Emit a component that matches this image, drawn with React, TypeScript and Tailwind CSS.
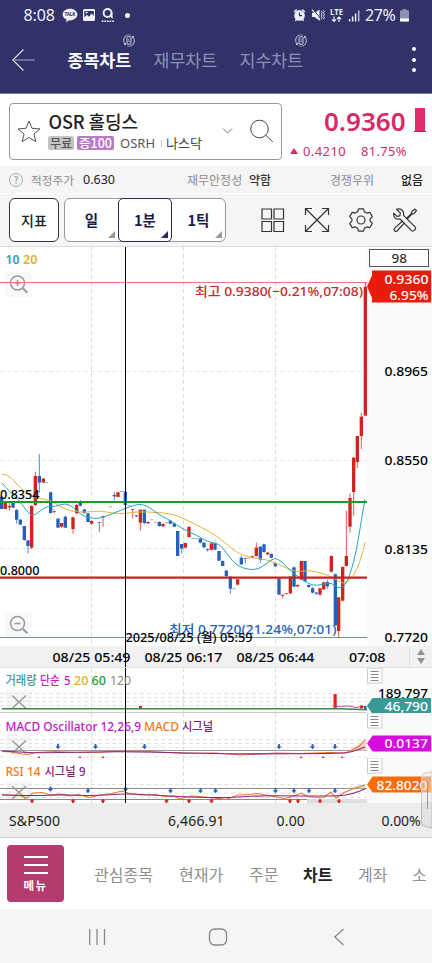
import React from "react";

const FONT = "font-['Noto_Sans','Noto_Sans_CJK_KR',sans-serif]";
const KR = "font-['Noto_Sans_CJK_KR',sans-serif]";

const RED = "#d3231c";
const BLUE = "#2560bd";

/* ---------- chart text ---------- */
type LabelProps = {
  x: number;
  y: number;
  w: number;
  size?: number;
  fill?: string;
  weight?: number;
  children: string;
};
function Label({ x, y, w, size = 13, fill = "#111", weight = 500, children }: LabelProps) {
  return (
    <text x={x} y={y} textLength={w} lengthAdjust="spacingAndGlyphs" fontSize={size} fill={fill} fontWeight={weight}>
      {children}
    </text>
  );
}

/* ---------- price data, in third-pixel units ---------- */
type Candle = [x: number, high: number, top: number, bottom: number, low: number, up: 0 | 1];
const candles: Candle[] = [
  [5, 155, 155, 192, 192, 0], [16, 172, 172, 192, 192, 1], [28, 170, 183, 187, 197, 1], [39, 172, 174, 188, 188, 0],
  [50, 192, 195, 224, 236, 0], [61, 222, 224, 239, 239, 0], [73, 243, 243, 285, 288, 0], [84, 286, 286, 303, 326, 0],
  [95, 180, 183, 308, 312, 1], [106, 80, 93, 180, 184, 1], [118, 27, 93, 113, 144, 0], [130, 98, 101, 112, 115, 1],
  [152, 140, 142, 204, 206, 0], [163, 195, 199, 201, 205, 1], [174, 219, 221, 248, 248, 0], [185, 234, 234, 245, 248, 1],
  [196, 213, 215, 248, 248, 0], [219, 215, 217, 252, 266, 1], [230, 176, 180, 205, 207, 1], [241, 165, 174, 182, 184, 0],
  [253, 192, 193, 204, 206, 0], [264, 205, 205, 231, 231, 0], [275, 226, 228, 236, 240, 1], [298, 230, 231, 232, 261, 0],
  [309, 212, 214, 218, 246, 1], [343, 142, 150, 154, 166, 0], [354, 142, 142, 156, 156, 1], [376, 138, 140, 180, 180, 0],
  [398, 192, 193, 195, 220, 1], [409, 210, 211, 214, 217, 0], [421, 194, 194, 233, 257, 1], [433, 194, 194, 234, 238, 0],
  [444, 229, 231, 235, 237, 1], [478, 229, 231, 243, 245, 0], [489, 236, 237, 244, 246, 1], [511, 225, 227, 236, 238, 0],
  [523, 233, 235, 245, 247, 0], [533, 258, 258, 333, 333, 0], [545, 297, 297, 311, 326, 0], [556, 294, 294, 308, 308, 1],
  [567, 243, 246, 276, 278, 1], [601, 279, 281, 293, 295, 0], [612, 291, 293, 307, 309, 0], [623, 311, 312, 315, 320, 0],
  [634, 293, 295, 314, 316, 1], [645, 293, 295, 314, 316, 0], [657, 318, 318, 347, 347, 0], [668, 346, 348, 363, 363, 0],
  [679, 375, 377, 393, 395, 0], [691, 393, 395, 431, 447, 0], [713, 403, 403, 419, 421, 1], [724, 332, 338, 358, 360, 0],
  [736, 338, 340, 342, 355, 0], [757, 332, 334, 338, 340, 1], [769, 293, 308, 333, 335, 1], [781, 303, 305, 344, 354, 0],
  [792, 296, 298, 321, 323, 0], [803, 321, 323, 328, 330, 1], [814, 325, 327, 338, 340, 0], [826, 352, 354, 364, 366, 0],
  [837, 401, 401, 449, 449, 0], [848, 449, 449, 452, 461, 1], [859, 445, 445, 447, 449, 1], [871, 393, 395, 445, 447, 1],
  [882, 365, 367, 425, 427, 0], [893, 418, 420, 424, 426, 1], [904, 348, 348, 404, 406, 1], [915, 348, 348, 409, 411, 0],
  [926, 419, 420, 426, 428, 0], [938, 426, 430, 443, 445, 0], [949, 441, 443, 446, 450, 0], [960, 428, 430, 449, 451, 1],
  [971, 410, 412, 433, 435, 1], [982, 404, 411, 424, 432, 0], [994, 331, 333, 380, 382, 1], [1006, 386, 388, 541, 543, 0],
  [1016, 457, 457, 558, 578, 1], [1028, 364, 366, 467, 469, 1], [1039, 197, 333, 363, 365, 1], [1050, 145, 159, 245, 263, 1],
  [1061, 36, 38, 141, 212, 1], [1072, -27, -27, 51, 69, 1], [1084, -97, -85, -27, 12, 1], [1096, -489, -475, -88, -88, 1],
];
const dojis: [number, number, string][] = [
  [140, 111, BLUE], [331, 184, RED], [365, 138, BLUE], [387, 181, BLUE], [455, 223, BLUE], [467, 230, BLUE],
  [500, 232, RED], [579, 279, BLUE], [590, 279, BLUE], [702, 430, BLUE], [746, 338, RED],
];
const ma10: [number, number][] = [
  [6, 114], [30, 142], [55, 164], [75, 190], [93, 213], [110, 207], [130, 190], [145, 184], [165, 185], [197, 174],
  [220, 187], [240, 207], [265, 219], [300, 221], [340, 205], [376, 190], [410, 178], [430, 179], [450, 188], [475, 208],
  [500, 220], [530, 240], [560, 258], [590, 270], [620, 290], [648, 294], [665, 304], [685, 332], [710, 362], [745, 374],
  [775, 373], [800, 355], [825, 337], [845, 350], [880, 385], [915, 410], [940, 422], [965, 419], [995, 412], [1015, 432],
  [1035, 422], [1050, 390], [1070, 315], [1085, 220], [1095, 163],
];
const ma20: [number, number][] = [
  [6, 88], [20, 88], [40, 105], [70, 138], [95, 155], [120, 161], [150, 165], [175, 182], [215, 200], [260, 202],
  [300, 197], [340, 205], [376, 206], [410, 200], [470, 202], [520, 207], [560, 225], [600, 245], [648, 271], [680, 298],
  [710, 322], [745, 337], [800, 343], [850, 365], [890, 382], [930, 375], [970, 386], [1000, 398], [1030, 418],
  [1050, 405], [1070, 375], [1085, 335], [1095, 292],
];

function smooth(p: [number, number][]) {
  let d = `M${p[0][0]} ${p[0][1]}`;
  for (let i = 1; i < p.length - 1; i++) {
    d += ` Q${p[i][0]} ${p[i][1]} ${(p[i][0] + p[i + 1][0]) / 2} ${(p[i][1] + p[i + 1][1]) / 2}`;
  }
  const last = p[p.length - 1];
  return `${d} L${last[0]} ${last[1]}`;
}
const line = (p: [number, number][]) => p.map((q) => q.join(",")).join(" ");

function VGrid({ y1, y2 }: { y1: number; y2: number }) {
  return (
    <g stroke="#dcdcdc" strokeDasharray="4 3" shapeRendering="crispEdges">
      <line x1="91.5" x2="91.5" y1={y1} y2={y2} />
      <line x1="183.5" x2="183.5" y1={y1} y2={y2} />
      <line x1="275.5" x2="275.5" y1={y1} y2={y2} />
    </g>
  );
}

/* ---------- status bar + title ---------- */
function RotateIcon() {
  return (
    <svg width="12" height="13" viewBox="0 0 12 13" fill="none" stroke="#dcdcf0" strokeWidth=".9">
      <rect x="4" y="2.7" width="4" height="7.6" rx="1" />
      <path d="M6 4.500v4" strokeWidth=".7" />
      <path d="M3.800 1.200C1.900 2 .7 4 .7 6.300c0 1.800.7 3.300 1.900 4.200M1 10.600h1.700V8.900" />
      <path d="M8.200 11.800c1.900-.8 3.100-2.800 3.100-5.100 0-1.800-.7-3.300-1.900-4.200M11 2.400H9.300v1.700" />
      <path d="M3.800 1.200C5 .7 6.500.6 7.700 1M8.200 11.800c-1.200.5-2.700.6-3.900.2" opacity=".6" />
    </svg>
  );
}

function StatusBar() {
  return (
    <div className="flex h-[30px] items-center pl-[23.5px] pr-[23px] text-[#f0f0fa]">
      <span className="w-[33.5px] whitespace-nowrap text-[16px] leading-none tracking-[-0.100px]">8:08</span>
      <svg className="ml-[5px]" width="16" height="15" viewBox="0 0 16 15">
        <path d="M8 .8c4.1 0 7.4 2.6 7.4 5.8S12.100 12.400 8 12.400l-1-.1L4 14.500l.6-2.900C2.200 10.700.6 8.800.6 6.600.6 3.400 3.900.8 8 .8z" fill="#f0f0fa" />
        <text x="2.600" y="8.400" fontSize="4.800" fontWeight="700" fill="#313268" textLength="10.800">TALK</text>
      </svg>
      <svg className="ml-1" width="14" height="14" viewBox="0 0 14 14">
        <path fillRule="evenodd" fill="#f0f0fa" d="M2.500 1h9A1.500 1.500 0 0 1 13 2.500v9a1.500 1.500 0 0 1-1.500 1.500h-9A1.500 1.500 0 0 1 1 11.500v-9A1.500 1.500 0 0 1 2.500 1zM2.300 9.500l2.600-2.700 2 1.900 2.800-3.200 2.100 2.400V3H2.300z" />
        <circle cx="4.600" cy="4.600" r="1" fill="#f0f0fa" />
      </svg>
      <svg className="ml-[5px]" width="14" height="16" viewBox="0 0 14 16" fill="none" stroke="#f0f0fa">
        <circle cx="6.600" cy="6" r="4" strokeWidth="1.900" />
        <path d="M10.600 6v3.600q0 1 1.200 1" strokeWidth="1.800" />
        <path d="M.8 14.200h12.400" strokeWidth="1.500" strokeDasharray="1.700 .9" />
      </svg>
      <span className="ml-[10px] size-[5px] rounded-full bg-[#f0f0fa]" />
      <div className="ml-auto flex items-center">
        <svg width="13" height="14" viewBox="0 0 13 14" fill="#f0f0fa">
          <path d="M.6 3.400 3.200 1l1 1.100L1.600 4.500zM12.400 3.400 9.800 1l-1 1.100 2.600 2.400z" />
          <circle cx="6.500" cy="7.400" r="5.300" />
          <path d="M2.500 13l1.300-2.500M10.500 13 9.200 10.500" stroke="#f0f0fa" strokeWidth="1.500" />
          <path d="M6.500 4.400v3.200h2.600" fill="none" stroke="#313268" strokeWidth="1.200" />
        </svg>
        <svg className="ml-[5px]" width="14" height="14" viewBox="0 0 14 14" fill="#f0f0fa">
          <path d="M1 5h2.500L8.500 1.500v11L3.500 9H1z" />
          <path d="M2 1l8 10" stroke="#313268" strokeWidth="1" />
          <path d="M1 1.600l8 10.600" stroke="#f0f0fa" strokeWidth="1.200" />
          <path d="M10.300 3l.8 1.300-.8 1.400.8 1.300-.8 1.400.8 1.300-.8 1.300M12.500 2l.8 1.400-.8 1.500.8 1.600-.8 1.600.8 1.500-.8 1.600" fill="none" stroke="#f0f0fa" strokeWidth=".9" />
        </svg>
        <svg className="ml-1" width="15" height="15" viewBox="0 0 15 15" fill="none" stroke="#f0f0fa" strokeWidth="1.200">
          <text x="1" y="6.800" fontSize="8" fontWeight="700" fill="#f0f0fa" stroke="none" textLength="13" lengthAdjust="spacingAndGlyphs">LTE</text>
          <path d="M5 8.600v4.600M3 11.300l2 2 2-2M10 14V9.200M8 11l2-2 2 2" />
        </svg>
        <svg className="ml-[4px]" width="13" height="13" viewBox="0 0 13 13" stroke="#f0f0fa" strokeWidth="1.500">
          <path d="M1.600 10v2.500M4.600 7.500v5" />
          <path d="M7.600 4.500v8" />
          <path d="M10.700 1.500v11" opacity=".75" />
        </svg>
        <span className="ml-[4px] w-[33px] whitespace-nowrap text-[16px] leading-none tracking-[-0.400px]">27%</span>
        <svg className="ml-[2px]" width="9" height="13" viewBox="0 0 9 13">
          <path d="M2.700 0h3.600v1.300H8A1 1 0 0 1 9 2.300V11.500a1 1 0 0 1-1 1H1a1 1 0 0 1-1-1V2.300a1 1 0 0 1 1-1h1.700z" fill="#8f8fb4" />
          <path d="M0 9.500h9v2a1 1 0 0 1-1 1H1a1 1 0 0 1-1-1z" fill="#fff" />
        </svg>
      </div>
    </div>
  );
}

function Header() {
  const tabs = [
    { name: "종목차트", cls: "w-[86px] font-bold text-white", rot: true },
    { name: "재무차트", cls: "w-[86px] text-[#8f8fb6]", rot: false },
    { name: "지수차트", cls: "w-[86px] text-[#8f8fb6]", rot: true },
  ];
  return (
    <header className="h-[94px] border-b border-[#77778f] bg-[#313268]">
      <StatusBar />
      <div className="flex h-[63px]">
        <svg className="ml-3 mt-[18px]" width="24" height="24" viewBox="0 0 24 24" fill="none" stroke="#e6e6f4">
          <path d="M11.500 1.500.8 12l10.700 10.500" strokeWidth="1.100" />
          <path d="M.8 12H23" stroke="#a9a9cc" />
        </svg>
        <div className={`ml-[31.5px] flex ${KR}`}>
          {tabs.map((t) => (
            <div key={t.name} className={`${t.cls} pt-[4px]`}>
              <div className="flex h-[13px] justify-end pr-[19px]">{t.rot && <RotateIcon />}</div>
              <div className="whitespace-nowrap text-[17.300px] leading-[25px]">{t.name}</div>
            </div>
          ))}
        </div>
        <div className="ml-auto mr-[16px] mt-[17px] flex flex-col gap-[6.500px]">
          <i className="size-1 rounded-full bg-white" />
          <i className="size-1 rounded-full bg-white" />
          <i className="size-1 rounded-full bg-white" />
        </div>
      </div>
    </header>
  );
}

/* ---------- stock summary ---------- */
function StockHeader() {
  return (
    <section className="flex h-[72px] bg-white pl-[9px] pt-[9px]">
      <div className="flex h-[57px] w-[273px] rounded-[4px] border border-[#999]">
        <svg className="ml-[7px] mt-[16px]" width="24" height="23" viewBox="0 0 24 23" fill="none" stroke="#555" strokeWidth="1">
          <path strokeLinejoin="round" d="M12 1l3 7.300 8 .6-6.100 5.100 2 7.700L12 17.500l-6.900 4.200 2-7.700L1 8.900l8-.6z" />
        </svg>
        <div className="ml-[7px] w-[166px]">
          <div className={`${KR} ml-[0.500px] mt-[4px] whitespace-nowrap text-[18px] font-medium leading-[26px] tracking-[-0.100px] text-[#222]`}>OSR 홀딩스</div>
          <div className={`${KR} mt-[2px] flex h-[14px] items-center whitespace-nowrap text-[13px] leading-[14px]`}>
            <span className="h-[14px] w-[26px] rounded-[2px] bg-[#c4c4c4] text-center text-[12px] font-medium leading-[13px] text-[#555]">무료</span>
            <span className="ml-[3px] h-[14px] w-[37px] rounded-[2px] bg-[#b77cc4] text-center text-[12.500px] font-medium leading-[13px] text-white">증100</span>
            <span className={`${FONT} ml-[6px] w-[37px] text-[13px] text-[#555]`}>OSRH</span>
            <i className="mx-1 h-[7px] w-px bg-[#ccc]" />
            <span className="text-[#444]">나스닥</span>
          </div>
        </div>
        <svg className="ml-[8px] mt-[23px]" width="11" height="8" viewBox="0 0 11 8" fill="none" stroke="#777">
          <path d="M1 1.500l4.500 4.500L10 1.500" />
        </svg>
        <svg className="ml-[16px] mt-[15px]" width="26" height="25" viewBox="0 0 26 25" fill="none" stroke="#444">
          <circle cx="10.500" cy="10" r="8.800" />
          <path d="M17 16.500l6.800 6.300" />
        </svg>
      </div>
      <div className="flex flex-1 flex-col text-[#d42c69]">
        <div className="flex h-[34px] items-start pl-[42px]">
          <span className="w-[84px] whitespace-nowrap pt-[5px] text-[26px] font-semibold leading-[26px] tracking-[0px]">0.9360</span>
          <span className="ml-[6px] mt-[5px] h-[24px] w-[12px] border-b border-[#555] px-[1px]"><i className="block h-full bg-[#e12d70]" /></span>
        </div>
        <div className="flex items-center whitespace-nowrap pl-[8px] pt-[5px] text-[13px] leading-[18px]">
          <i className="h-0 w-0 border-x-[4.500px] border-b-[6px] border-x-transparent border-b-[#d42c69]" />
          <span className="ml-[5px] w-[58px] tracking-[0.400px]">0.4210</span>
          <span className="tracking-[0.300px]">81.75%</span>
        </div>
      </div>
    </section>
  );
}

function InfoRow() {
  return (
    <div className={`${KR} flex h-[28px] items-center whitespace-nowrap border-b border-white bg-[#f5f5f5] pl-[9px] pr-[9px] text-[12px] text-[#8c8c8c]`}>
      <span className="flex size-[14px] items-center justify-center rounded-full border border-[#aaa] text-[10px] leading-none">?</span>
      <span className="ml-[8px] w-[52px] text-[11.700px]">적정주가</span>
      <span className={`${FONT} w-[104px] pt-[1px] text-[12.500px] text-[#222]`}>0.630</span>
      <span className="w-[62px] text-[12px]">재무안정성</span>
      <span className="w-[81px] font-medium text-[#333]">약함</span>
      <span>경쟁우위</span>
      <span className="ml-auto font-medium text-[#222]">없음</span>
    </div>
  );
}

function Corner({ c }: { c: string }) {
  return (
    <svg className="absolute bottom-[3px] right-[3px]" width="7" height="7" viewBox="0 0 7 7">
      <path d="M7 0v7H0z" fill={c} />
    </svg>
  );
}

function Toolbar() {
  return (
    <div className={`${KR} flex h-[53px] border-b border-[#ddd] bg-[#f5f5f5] pl-[9px] pt-[4px] text-[#1d1b4b]`}>
      <button className="h-[44px] w-[50px] rounded-[6px] border border-[#333] bg-white text-[14px] font-medium text-[#222]">지표</button>
      <div className="ml-[5px] flex h-[44px] w-[162px] rounded-[6px] border border-[#999] bg-white text-[14.500px] font-bold">
        <button className="relative w-[53px]">일<Corner c="#999" /></button>
        <button className="relative -my-px w-[54px] rounded-[5px] border-[1.500px] border-[#29275f]">1분<Corner c="#29275f" /></button>
        <button className="relative flex-1">1틱<Corner c="#999" /></button>
      </div>
      <div className="flex pl-[34px] pt-[9px]">
        <svg width="26" height="26" viewBox="0 0 26 26" fill="none" stroke="#333" strokeWidth="1.200">
          <path d="M2 2h9.500v10H2zM14 2h9.500v10H14zM2 14.500h9.500v10H2zM14 14.500h9.500v10H14z" />
        </svg>
        <svg className="ml-[18px]" width="26" height="26" viewBox="0 0 26 26" fill="none" stroke="#333" strokeWidth="1.200">
          <path d="M1.500 1.500l23 23M24.500 1.500l-23 23M1.500 8V1.500H8M18 1.500h6.500V8M24.500 18v6.500H18M8 24.500H1.500V18" />
        </svg>
        <svg className="ml-[18px]" width="26" height="26" viewBox="0 0 26 26" fill="none" stroke="#333" strokeWidth="1.200">
          <circle cx="13" cy="13" r="4" />
          <path strokeLinejoin="round" d="M10.500 1.800h5l.9 3 2.300 1.300 3.100-.8 2.500 4.300-2.200 2.300v2.200l2.200 2.300-2.500 4.300-3.100-.8-2.300 1.300-.9 3h-5l-.9-3-2.300-1.300-3.100.8-2.500-4.300 2.200-2.300v-2.200L1.700 9.600l2.500-4.300 3.100.8 2.300-1.300z" />
        </svg>
        <svg className="ml-[18px]" width="26" height="26" viewBox="0 0 26 26" fill="none" stroke="#333" strokeWidth="1.200" strokeLinejoin="round">
          <path d="M4.500 2.200l3.800 3.700-.5 3-3 .4L1.700 6.200C1 9.800 3.800 13 8 12l11.500 11.600c1.700 1.500 5.300-1.500 3.600-3.700L11.500 8.300C12.500 4.200 8.900.8 4.500 2.200z" />
          <path d="M14.500 11.500l5-5 .3-2 3.200-2.400 1.500 1.500L22 6.700l-2 .4-5 5M10.500 14l-8.300 7.600c-.9 1.400 1.200 3.500 2.600 2.600L12.500 16" />
        </svg>
      </div>
    </div>
  );
}

/* ---------- charts ---------- */
function ZoomGlass({ y, plus }: { y: number; plus?: boolean }) {
  return (
    <g>
      <rect x="5.500" y={y - 11} width="26" height="25" rx="2" fill="#f7f7f7" opacity=".85" />
      <g fill="none" stroke="#999">
        <circle cx="17.500" cy={y} r="7" strokeWidth="1.500" />
        <path d={`M14.500 ${y}h6`} strokeWidth="1.500" />
        {plus && <path d={`M17.500 ${y - 3}v6`} strokeWidth="1.500" />}
        <path d={`M23 ${y + 5.500}l4.300 4.300`} strokeWidth="2" />
      </g>
    </g>
  );
}

function PriceChart() {
  return (
    <svg className="block" width="432" height="399" viewBox="0 247 432 399">
      <rect x="367" y="247" width="65" height="399" fill="#fafafa" />
      <VGrid y1={247} y2={646} />
      <g stroke="#e6e6e6" strokeDasharray="4 3" shapeRendering="crispEdges">
        <path d="M0 371.500H367M0 460.500H367M0 548.500H367" />
      </g>
      <ZoomGlass y={283} plus />
      <ZoomGlass y={623.500} />
      <path d="M0 282.500H367" stroke="#e07a78" />
      <path d="M0 637.500H367" stroke="#6f91c6" />
      <g transform="translate(0 445) scale(.33333)">
        {candles.map(([x, h, t, b, l, up]) => (
          <g key={x} fill={up ? RED : BLUE}>
            <rect x={x - 1.500} y={h} width="3" height={l - h} opacity=".75" />
            <rect x={x - 5} y={t} width="10" height={Math.max(b - t, 2)} />
          </g>
        ))}
        {dojis.map(([x, y, c]) => (
          <rect key={x} x={x - 5} y={y} width="10" height="3" fill={c} opacity=".5" />
        ))}
        <path d={smooth(ma20)} fill="none" stroke="#dfb437" strokeWidth="3" />
        <path d={smooth(ma10)} fill="none" stroke="#25a5bb" strokeWidth="3" />
      </g>
      <path d="M0 502H367" stroke="#1f9a26" strokeWidth="2.200" />
      <path d="M0 577.700H367" stroke="#cc1f22" strokeWidth="2.200" />
      <path d="M125.500 247V646" stroke="#000" shapeRendering="crispEdges" />
      <Label x={5.500} y={264} w={14} size={12} fill="#2aa0bb" weight={600}>10</Label>
      <Label x={23} y={264} w={14.500} size={12} fill="#e3b12c" weight={600}>20</Label>
      <Label x={0} y={499} w={39.500} size={12} fill="#000">0.8354</Label>
      <Label x={0} y={574.500} w={39.500} size={12} fill="#000">0.8000</Label>
      <Label x={195} y={295.500} w={168} fill="#c8262a">최고 0.9380(−0.21%,07:08)</Label>
      <Label x={169} y={633.500} w={167.500} fill="#2560bd">최저 0.7720(21.24%,07:01)</Label>
      <Label x={125.500} y={642} w={127} size={12} fill="#000">2025/08/25 (월) 05:59</Label>
      <rect x="369.500" y="249.500" width="59" height="17" fill="#fff" stroke="#555" />
      <Label x={391.500} y={262.500} w={15.500} size={12.500} fill="#333">98</Label>
      <path d="M367 286.500l5-11V270.500h59v32h-59V298z" fill="#e91c0c" />
      <Label x={384.500} y={283.500} w={44} fill="#fff">0.9360</Label>
      <Label x={389.500} y={300} w={39} fill="#fff">6.95%</Label>
      <Label x={384.500} y={376.300} w={43.500} fill="#000">0.8965</Label>
      <Label x={384.500} y={465.200} w={43.500} fill="#000">0.8550</Label>
      <Label x={384.500} y={553.700} w={43.500} fill="#000">0.8135</Label>
      <Label x={384.500} y={642.200} w={43.500} fill="#000">0.7720</Label>
    </svg>
  );
}

function TimeAxis() {
  return (
    <div className="flex h-[22px] border-b border-[#e2e2e2] bg-[#f2f2f2]">
      <svg className="block" width="409" height="21" viewBox="0 646 409 21">
        <path d="M125.500 646V668" stroke="#000" shapeRendering="crispEdges" />
        <Label x={52.500} y={661.500} w={78} fill="#000">08/25 05:49</Label>
        <Label x={144.500} y={661.500} w={78} fill="#000">08/25 06:17</Label>
        <Label x={236.500} y={661.500} w={78} fill="#000">08/25 06:44</Label>
        <Label x={349} y={661.500} w={36.500} fill="#000">07:08</Label>
      </svg>
      <div className="flex flex-1 flex-col items-center justify-center gap-[3px] border-l border-[#e2e2e2] pr-[1px]">
        <i className="h-0 w-0 border-x-[4.500px] border-b-[6px] border-x-transparent border-b-[#909090]" />
        <i className="h-0 w-0 border-x-[4.500px] border-t-[6px] border-x-transparent border-t-[#909090]" />
      </div>
    </div>
  );
}

function PanelChrome({ y1, y2, menuY, xY }: { y1: number; y2: number; menuY: number; xY: number }) {
  return (
    <g>
      <rect x="367" y={y1} width="65" height={y2 - y1} fill="#fafafa" />
      <VGrid y1={y1} y2={y2} />
      <rect x="5.500" y={xY - 12} width="26" height="20" fill="#f5f5f5" opacity=".8" />
      <rect x="367.500" y={menuY - 7.500} width="14.500" height="15" fill="#fff" stroke="#ccc" />
      <path d={`M370.500 ${menuY - 4}h8M370.500 ${menuY - 1}h8M370.500 ${menuY + 2}h8M370.500 ${menuY + 5}h8`} stroke="#777" strokeWidth=".9" />
    </g>
  );
}
function Cross({ y }: { y: number }) {
  return <path d={`M12 ${y - 6}l14 13M26 ${y - 6}l-14 13`} stroke="#999" strokeWidth="1.500" />;
}
function Dashes({ ys }: { ys: number[] }) {
  return (
    <g stroke="#e2e2e2" strokeDasharray="4 3">
      {ys.map((y) => <line key={y} x1="0" x2="367" y1={y} y2={y} />)}
    </g>
  );
}
function Marker({ x, y, up }: { x: number; y: number; up?: boolean }) {
  return up ? (
    <path d={`M${x} ${y - 2.500}l2.500 3h-1.500v2h-2v-2h-1.500z`} fill="#cf2b2b" />
  ) : (
    <path d={`M${x} ${y + 2.700}l2.600-3h-1.700v-2.200h-1.800v2.200h-1.700z`} fill="#2560bd" />
  );
}
function Tag({ y, c, children }: { y: number; c: string; children?: React.ReactNode }) {
  return (
    <g>
      <path d={`M367 ${y}l5.500-8H431v16h-58.500z`} fill={c} />
      {children}
    </g>
  );
}

const macd: [number, number][] = [[2, 751.5], [12, 752], [22, 754], [28, 754.5], [36, 752.5], [55, 751.5], [75, 752.5], [95, 752.5], [125, 751], [150, 751.5], [185, 753.5], [216, 753], [240, 755], [275, 753], [300, 753.5], [330, 752.5], [345, 753], [352, 750], [360, 745.5], [365, 739.5]];
const macdSignal: [number, number][] = [[2, 751], [30, 753], [60, 752.5], [125, 751.5], [190, 753], [240, 754], [340, 753.5], [352, 752], [365, 747]];
const rsi: [number, number][] = [[2, 794.5], [12, 795], [20, 795.5], [27, 798], [33, 793], [42, 792.5], [50, 795], [60, 794], [70, 796], [78, 794.500], [90, 797.500], [100, 795], [112, 793.500], [122, 791], [128, 793], [140, 795], [155, 794.500], [165, 796.500], [174, 796], [180, 799], [190, 796], [200, 796.500], [215, 798], [226, 799.500], [238, 795], [248, 794.500], [258, 793.500], [268, 795.500], [277, 797], [284, 798.500], [293, 796.500], [301, 793], [308, 796.500], [318, 797.500], [324, 797], [331, 792], [336, 798], [344, 792.500], [350, 790], [357, 787.500], [365, 785]];
const rsiSignal: [number, number][] = [[2, 795], [35, 796], [60, 794.500], [95, 796], [125, 793.500], [150, 795], [190, 797], [225, 798], [260, 795.500], [300, 796], [340, 796], [352, 794], [365, 789]];

function Indicators() {
  return (
    <div className="flex flex-col bg-white">
      <svg className="block" width="432" height="45" viewBox="0 668 432 45">
        <PanelChrome y1={668} y2={713} menuY={675.500} xY={702} />
        <Dashes ys={[693.500, 697.500, 701.500, 705.500]} />
        <Cross y={701.500} />
        <rect x="139" y="706" width="3" height="2" fill="#d3231c" />
        <rect x="333.500" y="694" width="3.200" height="14" fill="#e81f1f" />
        <path d="M334 707.500l3-1 13-.5 5 1.500 10-1" stroke="#c44bb6" fill="none" />
        <rect x="360" y="705.500" width="3" height="3" fill="#d3231c" />
        <rect x="364" y="706" width="2.500" height="3" fill="#2560bd" />
        <path d="M2 708.700H340l27 1" stroke="#3a8a45" strokeWidth="1.500" fill="none" />
        <path d="M0 712.500H367" stroke="#ccc" />
        <path d="M125.500 668V713" stroke="#000" shapeRendering="crispEdges" />
        <Label x={5.500} y={685} w={31} size={12} fill="#399a96">거래량</Label>
        <Label x={40} y={685} w={20} size={12} fill="#d21bc9">단순</Label>
        <Label x={64} y={685} w={6.500} size={12} fill="#d21bc9">5</Label>
        <Label x={74} y={685} w={14.500} size={12} fill="#e3b12c">20</Label>
        <Label x={91.500} y={685} w={14.500} size={12} fill="#1f9a36">60</Label>
        <Label x={110} y={685} w={21} size={12} fill="#888" weight={400}>120</Label>
        <Label x={378} y={698} w={50} fill="#000">189,797</Label>
        <Tag y={706} c="#399a96"><Label x={384.500} y={711} w={43.500} fill="#fff">46,790</Label></Tag>
      </svg>
      <svg className="block" width="432" height="45" viewBox="0 713 432 45">
        <PanelChrome y1={713} y2={758} menuY={720.500} xY={747.500} />
        <Dashes ys={[739.500, 743.500, 747.500, 757]} />
        <path d="M0 750.500H367" stroke="#999" />
        <Cross y={746.500} />
        <path d="M347 751l7-3 7-5 5-3v11z" fill="#f6bea6" opacity=".7" />
        <polyline points={line(macd)} fill="none" stroke="#e97733" strokeWidth="1.100" />
        <path d={smooth(macdSignal)} fill="none" stroke="#8d267d" strokeWidth="1.100" />
        {[58, 95.500, 144.500, 279, 312.500, 335].map((x) => <Marker key={x} x={x} y={746.500} />)}
        {[39, 80, 103, 301, 323, 342].map((x) => <path key={x} d={`M${x - 1.500} 758l1.500-2 1.500 2z`} fill="#cf2b2b" />)}
        <path d="M125.500 713V758" stroke="#000" shapeRendering="crispEdges" />
        <Label x={5.500} y={730.500} w={135.500} size={12} fill="#c313cf">MACD Oscillator 12,26,9</Label>
        <Label x={144} y={730.500} w={35} size={12} fill="#ef7a22">MACD</Label>
        <Label x={182} y={730.500} w={31} size={12} fill="#7a2277">시그널</Label>
        <Tag y={743.500} c="#d50be0"><Label x={384.500} y={748.300} w={43.500} fill="#fff">0.0137</Label></Tag>
      </svg>
      <svg className="block" width="432" height="45" viewBox="0 758 432 45">
        <PanelChrome y1={758} y2={803} menuY={765.500} xY={793} />
        <Dashes ys={[784.500, 793, 797.500]} />
        <path d="M0 788.500H367M0 799.500H367" stroke="#888" />
        <Cross y={792} />
        <rect x="307" y="799" width="60" height="4" fill="#ddd" />
        <path d="M344 788.500l7-1 6-1.500 8-2v4.500z" fill="#c9d6b5" opacity=".8" />
        <polyline points={line(rsi)} fill="none" stroke="#e97733" strokeWidth="1.100" />
        <path d={smooth(rsiSignal)} fill="none" stroke="#8d267d" strokeWidth="1.100" />
        {[50.500, 88, 125.500, 170.500, 200.500, 215.500, 275.500, 294, 309, 335].map((x) => <Marker key={x} x={x} y={x === 125.500 || x === 50.500 ? 789 : 790.500} />)}
        {[32, 73, 103, 166.500, 189, 211.500, 290, 298, 320, 339].map((x) => <Marker key={x} x={x} y={801} up />)}
        <path d="M125.500 758V803" stroke="#000" shapeRendering="crispEdges" />
        <Label x={5.500} y={776} w={35} size={12} fill="#ef7a22">RSI 14</Label>
        <Label x={44.500} y={776} w={31} size={12} fill="#7a2277">시그널</Label>
        <Label x={79} y={776} w={6.500} size={12} fill="#7a2277">9</Label>
        <Tag y={784.500} c="#fb6c0a"><Label x={376.500} y={789.500} w={51} fill="#fff">82.8020</Label></Tag>
        <path d="M421.500 803V776q0-2 2-2.500l8.500-2V803z" fill="#e8e8e8" fillOpacity=".5" stroke="#ccc" />
        <path d="M427.500 782V803" stroke="#999" />
      </svg>
    </div>
  );
}

/* ---------- bottom ---------- */
function IndexBar() {
  return (
    <div className="relative flex h-[35px] items-center whitespace-nowrap border-b border-[#ccc] bg-[#ededed] pl-[9px] text-[14px] text-[#222]">
      <span className="w-[159px] tracking-[0.100px]">S&amp;P500</span>
      <span className="w-[108.500px] tracking-[0.150px]">6,466.91</span>
      <span className="w-[105px] tracking-[0.200px]">0.00</span>
      <span className="tracking-[-0.050px]">0.00%</span>
      <svg className="absolute right-0 top-0" width="11" height="26" viewBox="0 0 11 26">
        <path d="M.5 0V20q0 2.500 2.500 3l8 2V0" fill="#dcdcdc" fillOpacity=".6" stroke="#bbb" />
        <path d="M6.500 0V6" stroke="#999" />
      </svg>
    </div>
  );
}

function BottomTabs() {
  return (
    <nav className={`${KR} flex h-[71px] items-center overflow-hidden whitespace-nowrap bg-white pl-[7px] text-[16px] text-[#8f8f8f]`}>
      <div className="flex h-[57px] w-[57px] shrink-0 flex-col items-center rounded-[4px] bg-[#b53a6d] pt-[11px] text-white">
        <div className="flex w-6 flex-col gap-[6px]">
          <i className="h-[2px] bg-white" />
          <i className="h-[2px] bg-white" />
          <i className="h-[2px] bg-white" />
        </div>
        <span className="mt-[3px] text-[11.500px] font-bold leading-[16px] tracking-[1.500px]">메뉴</span>
      </div>
      <span className="ml-[30px] w-[85px] shrink-0">관심종목</span>
      <span className="w-[70px] shrink-0">현재가</span>
      <span className="w-[54px] shrink-0">주문</span>
      <span className="w-[55px] shrink-0 font-bold text-[#222]">차트</span>
      <span className="w-[54px] shrink-0">계좌</span>
      <span className="shrink-0">소</span>
    </nav>
  );
}

function SystemNav() {
  return (
    <div className="flex h-[54px] items-center bg-[#f5f5f7] pl-[88px] pt-[2px]">
      <svg width="18" height="18" viewBox="0 0 18 18" stroke="#888" strokeWidth="1.300"><path d="M1.700 1v16M9 1v16M16.500 1v16" /></svg>
      <svg className="ml-[102px]" width="20" height="18" viewBox="0 0 20 18" fill="none" stroke="#888" strokeWidth="1.300"><rect x="1.500" y="1" width="17" height="16" rx="5" /></svg>
      <svg className="ml-[105px]" width="12" height="18" viewBox="0 0 12 18" fill="none" stroke="#888" strokeWidth="1.300"><path d="M10.500 1L1.800 9l8.700 8" /></svg>
    </div>
  );
}

export default function App() {
  return (
    <main className={`${FONT} flex h-[963px] w-[432px] flex-col overflow-hidden bg-white`}>
      <Header />
      <StockHeader />
      <InfoRow />
      <Toolbar />
      <PriceChart />
      <TimeAxis />
      <Indicators />
      <IndexBar />
      <BottomTabs />
      <SystemNav />
    </main>
  );
}
